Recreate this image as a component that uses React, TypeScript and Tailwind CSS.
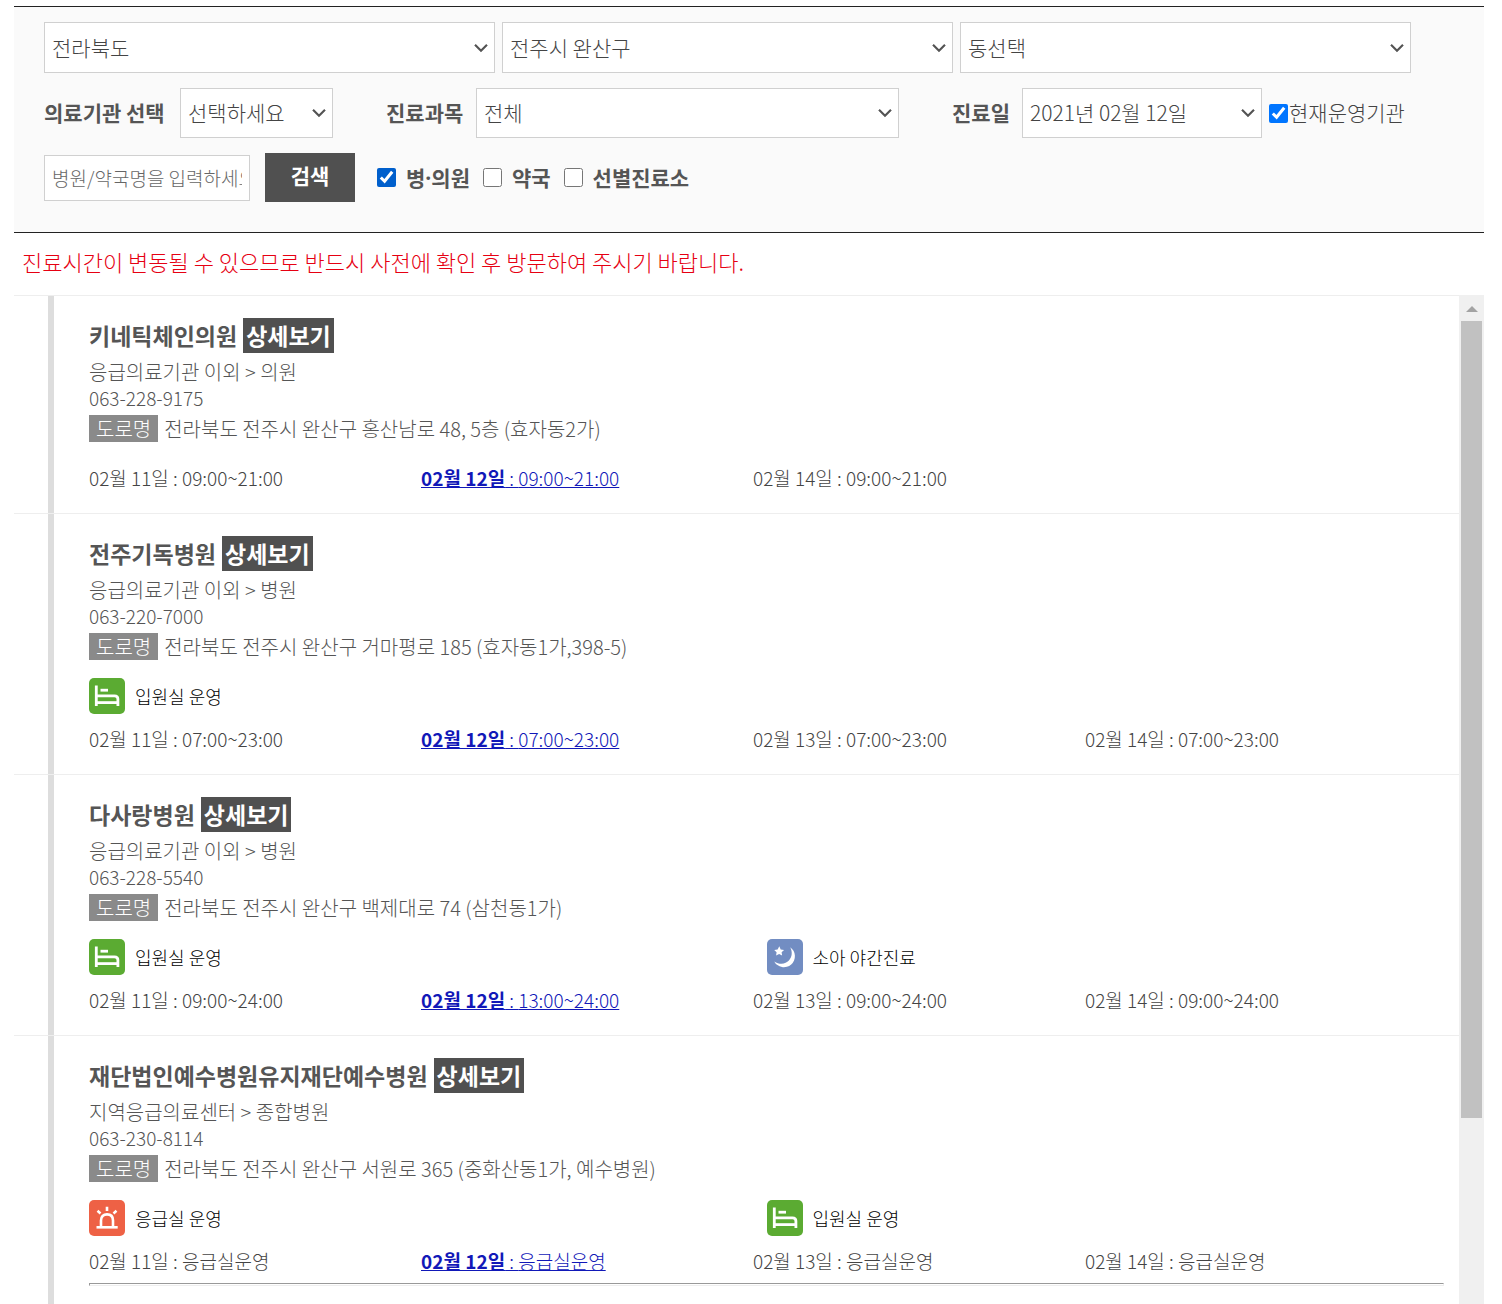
import type { ReactNode } from 'react';

type ServiceKind = 'ward' | 'night' | 'emergency';

interface Schedule {
  date: string;
  hours: string;
  selected?: boolean;
}

interface Hospital {
  name: string;
  category: string;
  phone: string;
  address: string;
  services: ServiceKind[];
  schedules: Schedule[];
  divider?: boolean;
}

const hospitals: Hospital[] = [
  {
    name: '키네틱체인의원',
    category: '응급의료기관 이외 > 의원',
    phone: '063-228-9175',
    address: '전라북도 전주시 완산구 홍산남로 48, 5층 (효자동2가)',
    services: [],
    schedules: [
      { date: '02월 11일', hours: '09:00~21:00' },
      { date: '02월 12일', hours: '09:00~21:00', selected: true },
      { date: '02월 14일', hours: '09:00~21:00' },
    ],
  },
  {
    name: '전주기독병원',
    category: '응급의료기관 이외 > 병원',
    phone: '063-220-7000',
    address: '전라북도 전주시 완산구 거마평로 185 (효자동1가,398-5)',
    services: ['ward'],
    schedules: [
      { date: '02월 11일', hours: '07:00~23:00' },
      { date: '02월 12일', hours: '07:00~23:00', selected: true },
      { date: '02월 13일', hours: '07:00~23:00' },
      { date: '02월 14일', hours: '07:00~23:00' },
    ],
  },
  {
    name: '다사랑병원',
    category: '응급의료기관 이외 > 병원',
    phone: '063-228-5540',
    address: '전라북도 전주시 완산구 백제대로 74 (삼천동1가)',
    services: ['ward', 'night'],
    schedules: [
      { date: '02월 11일', hours: '09:00~24:00' },
      { date: '02월 12일', hours: '13:00~24:00', selected: true },
      { date: '02월 13일', hours: '09:00~24:00' },
      { date: '02월 14일', hours: '09:00~24:00' },
    ],
  },
  {
    name: '재단법인예수병원유지재단예수병원',
    category: '지역응급의료센터 > 종합병원',
    phone: '063-230-8114',
    address: '전라북도 전주시 완산구 서원로 365 (중화산동1가, 예수병원)',
    services: ['emergency', 'ward'],
    schedules: [
      { date: '02월 11일', hours: '응급실운영' },
      { date: '02월 12일', hours: '응급실운영', selected: true },
      { date: '02월 13일', hours: '응급실운영' },
      { date: '02월 14일', hours: '응급실운영' },
    ],
    divider: true,
  },
];

const serviceLabels: Record<ServiceKind, string> = {
  ward: '입원실 운영',
  night: '소아 야간진료',
  emergency: '응급실 운영',
};

function ServiceIcon({ kind }: { kind: ServiceKind }) {
  if (kind === 'ward') {
    return (
      <svg viewBox="0 0 36 36" className="size-9 shrink-0" aria-hidden="true">
        <rect width="36" height="36" rx="5" fill="#5bab32" />
        <g fill="none" stroke="#fff" strokeWidth="2.8">
          <path d="M7.3 7.5V28" />
          <path d="M11.5 12.2h7.5" />
          <path d="M7.3 17.8h18.2c2.2 0 3.4 1.2 3.4 3.2V28" />
          <path d="M7.3 24.6h21.6" />
        </g>
      </svg>
    );
  }
  if (kind === 'night') {
    return (
      <svg viewBox="0 0 36 36" className="size-9 shrink-0" aria-hidden="true">
        <rect width="36" height="36" rx="5" fill="#728dc2" />
        <path d="M23.2 8.2a11 11 0 1 1-16 14.2c5.2 3.4 11.4 2.9 14.7-.9 3.3-3.7 3.7-8.7 1.3-13.3Z" fill="#fff" />
        <path d="m12.3 7.3 1.4 3.1 3.4.5-2.5 2.3.5 3.4-3-1.6-3 1.6.5-3.4-2.4-2.3 3.4-.5Z" fill="#fff" />
      </svg>
    );
  }
  return (
    <svg viewBox="0 0 36 36" className="size-9 shrink-0" aria-hidden="true">
      <rect width="36" height="36" rx="5" fill="#ee6145" />
      <g fill="none" stroke="#fff" strokeWidth="2.6">
        <path d="M7.5 27.3h21.2" />
        <path d="M12 27v-6.5c0-3.8 2.3-6.1 6-6.1s6 2.3 6 6.1V27" />
        <path d="M18 6.8v4.3M8.5 10.8l3 2.6M27.5 10.8l-3 2.6" />
      </g>
    </svg>
  );
}

interface SelectProps {
  id: string;
  label?: string;
  value: string;
  className: string;
}

function SelectBox({ id, label, value, className }: SelectProps) {
  return (
    <div className={`relative ${className}`}>
      <select
        id={id}
        aria-label={label}
        className="h-full w-full appearance-none border border-[#d0d0d0] bg-white pl-[7px] pr-8 text-[21px] font-light text-[#444]"
      >
        <option>{value}</option>
      </select>
      <svg
        viewBox="0 0 14 9"
        className="pointer-events-none absolute right-[7px] top-1/2 h-[9px] w-[14px] -translate-y-1/2"
        aria-hidden="true"
      >
        <path d="M1 1.2 7 7.2l6-6" fill="none" stroke="#555" strokeWidth="2.2" />
      </svg>
    </div>
  );
}

function FilterCheck({ checked, children }: { checked?: boolean; children: ReactNode }) {
  return (
    <label className="flex items-center gap-[10px] font-['Open_Sans','Noto_Sans_CJK_KR',sans-serif] text-[21px] font-bold leading-6">
      <input type="checkbox" defaultChecked={checked} className="size-[19px] accent-[#005fcc]" />
      {children}
    </label>
  );
}

function SearchForm() {
  return (
    <form
      className="border-y border-[#222] bg-[#fafafa] pt-[15px] pr-[73px] pb-[30px] pl-[30px]"
      onSubmit={(e) => e.preventDefault()}
    >
      <div className="grid grid-cols-3 gap-[7px]">
        <SelectBox id="sido" label="시도" value="전라북도" className="h-[51px]" />
        <SelectBox id="sigungu" label="시군구" value="전주시 완산구" className="h-[51px]" />
        <SelectBox id="dong" label="동" value="동선택" className="h-[51px]" />
      </div>

      <div className="mt-[15px] flex h-[50px] items-center text-[21px]">
        <label htmlFor="org" className="w-[136px] shrink-0 font-bold">의료기관 선택</label>
        <SelectBox id="org" value="선택하세요" className="h-full w-[153px] shrink-0" />
        <label htmlFor="subject" className="ml-[53px] w-[90px] shrink-0 font-bold">진료과목</label>
        <SelectBox id="subject" value="전체" className="h-full flex-1" />
        <label htmlFor="day" className="ml-[53px] w-[70px] shrink-0 font-bold">진료일</label>
        <SelectBox id="day" value="2021년 02월 12일" className="h-full w-[240px] shrink-0" />
        <label className="ml-[7px] flex w-[142px] shrink-0 items-center whitespace-nowrap font-light text-[#444]">
          <input type="checkbox" defaultChecked className="mr-px size-[19px] accent-[#0075ff]" />
          현재운영기관
        </label>
      </div>

      <div className="mt-[15px] flex items-center">
        <input
          type="text"
          aria-label="병원/약국명"
          placeholder="병원/약국명을 입력하세요"
          className="h-[46px] w-[206px] border border-[#d0d0d0] bg-white px-[7px] text-[19px] font-light placeholder:text-[#666]"
        />
        <button type="submit" className="ml-[15px] h-[49px] w-[90px] bg-[#505050] pb-1 text-[21px] font-bold text-white">
          검색
        </button>
        <div className="ml-[22px] flex gap-[13px]">
          <FilterCheck checked>병·의원</FilterCheck>
          <FilterCheck>약국</FilterCheck>
          <FilterCheck>선별진료소</FilterCheck>
        </div>
      </div>
    </form>
  );
}

function HospitalItem({ hospital }: { hospital: Hospital }) {
  const { name, category, phone, address, services, schedules, divider } = hospital;
  return (
    <li className="border-t border-[#eee] pl-[34px]">
      <div className="border-l-6 border-[#ddd] pt-[22px] pr-[15px] pb-[22px] pl-[35px]">
        <h2 className="flex h-[35px] items-center gap-[6px] text-[23px] font-bold text-[#555]">
          {name}
          <a href="#" className="bg-[#505050] px-[3px] leading-[35px] text-white">상세보기</a>
        </h2>
        <p className="mt-[6px] text-[20px] leading-[26px]">{category}</p>
        <p className="text-[19px] leading-[25px]">{phone}</p>
        <p className="mt-[5px] flex items-center gap-[6px] text-[20px] leading-[27px]">
          <span className="bg-[#8a8a8a] px-[7px] text-white">도로명</span>
          {address}
        </p>
        {services.length > 0 && (
          <ul className="mt-[18px] grid grid-cols-2">
            {services.map((kind) => (
              <li key={kind} className="flex items-center gap-[10px] text-[18px] text-black">
                <ServiceIcon kind={kind} />
                {serviceLabels[kind]}
              </li>
            ))}
          </ul>
        )}
        <ul className={`grid grid-cols-4 pr-[27px] text-[19px] leading-[26px] text-[#444] ${services.length > 0 ? 'mt-3' : 'mt-[23px]'}`}>
          {schedules.map(({ date, hours, selected }) => (
            <li key={date} className={selected ? 'text-[#1118b8] underline' : ''}>
              <span className={selected ? 'font-bold' : ''}>{date}</span> : {hours}
            </li>
          ))}
        </ul>
        {divider && <hr className="mt-[9px] mb-12 h-[3px] border border-[#eee] border-t-[#999] border-l-[#999]" />}
      </div>
    </li>
  );
}

export default function App() {
  return (
    <main className="flex h-screen flex-col overflow-hidden bg-white pt-[6px] pr-[18px] pl-[14px] font-['Noto_Sans_CJK_KR',sans-serif] text-[#555]">
      <SearchForm />
      <p className="px-2 pt-[14px] pb-5 text-[22px] font-light leading-7 text-[#e60012]">
        진료시간이 변동될 수 있으므로 반드시 사전에 확인 후 방문하여 주시기 바랍니다.
      </p>
      <div className="flex min-h-0 flex-1">
        <ul className="flex-1 overflow-hidden font-light text-[#555]">
          {hospitals.map((hospital) => (
            <HospitalItem key={hospital.name} hospital={hospital} />
          ))}
        </ul>
        <div className="w-[25px] shrink-0 bg-[#f0f0f0] px-[2px]" aria-hidden="true">
          <div className="flex h-[26px] items-center justify-center pt-[2px]">
            <svg viewBox="0 0 12 6" className="h-[6px] w-3">
              <path d="M6 0 12 6H0Z" fill="#a3a3a3" />
            </svg>
          </div>
          <div className="h-[797px] bg-[#c1c1c1]" />
        </div>
      </div>
    </main>
  );
}
